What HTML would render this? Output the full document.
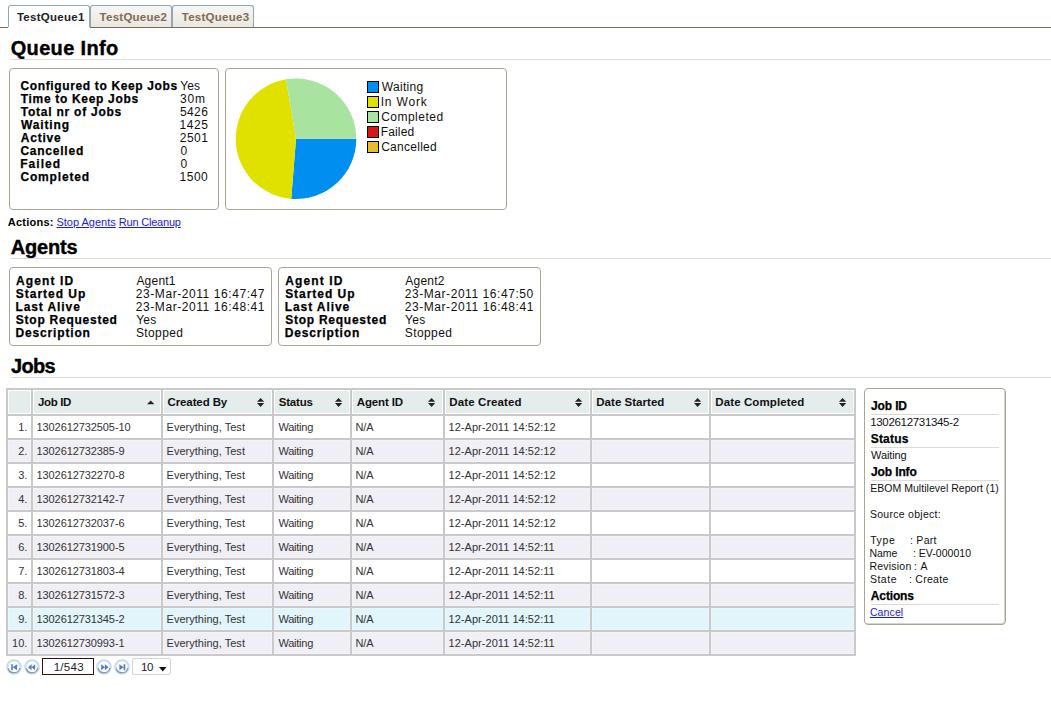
<!DOCTYPE html>
<html><head><meta charset="utf-8"><style>
html,body{margin:0;padding:0;background:#fff;width:1051px;height:702px;overflow:hidden;position:relative}
body{font-family:"Liberation Sans",sans-serif}
.t{position:absolute;white-space:nowrap;line-height:1}
.r{position:absolute}
</style></head><body>
<div class="r" style="left:0px;top:27px;width:8px;height:1px;background:#7b6a55"></div>
<div class="r" style="left:90px;top:27px;width:961px;height:1px;background:#7b6a55"></div>
<div class="r" style="left:8px;top:5px;width:82px;height:22px;background:#fff;border:1px solid #8fa7b9;border-bottom:none;border-radius:3px 3px 0 0;box-sizing:border-box"></div>
<div class="r" style="left:90px;top:5px;width:82px;height:22px;background:linear-gradient(#f7f6f2,#e9e7e0);border:1px solid #8fa7b9;border-bottom:none;border-radius:3px 3px 0 0;box-sizing:border-box"></div>
<div class="r" style="left:172px;top:5px;width:82px;height:22px;background:linear-gradient(#f7f6f2,#e9e7e0);border:1px solid #8fa7b9;border-bottom:none;border-radius:3px 3px 0 0;box-sizing:border-box"></div>
<div class="t " style="left:16.875px;top:11.96px;font-size:11.5px;font-weight:bold;color:#222;letter-spacing:0.286px;">TestQueue1</div>
<div class="t " style="left:99.575px;top:11.96px;font-size:11.5px;font-weight:bold;color:#7e6b55;letter-spacing:0.256px;">TestQueue2</div>
<div class="t " style="left:181.775px;top:11.96px;font-size:11.5px;font-weight:bold;color:#7e6b55;letter-spacing:0.256px;">TestQueue3</div>
<div class="t " style="left:10.65px;top:38.07px;font-size:20px;font-weight:bold;letter-spacing:0.356px;-webkit-text-stroke:0.4px #000;">Queue Info</div>
<div class="r" style="left:11px;top:59px;width:1040px;height:1px;background:#dcdcd6"></div>
<div class="t " style="left:10.7px;top:237.27px;font-size:20px;font-weight:bold;letter-spacing:-0.18px;-webkit-text-stroke:0.4px #000;">Agents</div>
<div class="r" style="left:11px;top:258px;width:1040px;height:1px;background:#dcdcd6"></div>
<div class="t " style="left:10.925px;top:356.27px;font-size:20px;font-weight:bold;letter-spacing:-0.633px;-webkit-text-stroke:0.4px #000;">Jobs</div>
<div class="r" style="left:11px;top:377px;width:1040px;height:1px;background:#dcdcd6"></div>
<div class="r" style="left:9px;top:68px;width:210px;height:142px;border:1px solid #aaa696;border-radius:4px;box-sizing:border-box"></div>
<div class="t " style="left:20.4px;top:79.74px;font-size:12px;font-weight:bold;letter-spacing:0.643px;-webkit-text-stroke:0.25px #000;">Configured to Keep Jobs</div>
<div class="t " style="left:180.15px;top:79.74px;font-size:12px;color:#111;letter-spacing:0.2px;">Yes</div>
<div class="t " style="left:20.775px;top:92.74px;font-size:12px;font-weight:bold;letter-spacing:0.677px;-webkit-text-stroke:0.25px #000;">Time to Keep Jobs</div>
<div class="t " style="left:179.9px;top:92.74px;font-size:12px;color:#111;letter-spacing:0.838px;">30m</div>
<div class="t " style="left:20.775px;top:105.74px;font-size:12px;font-weight:bold;letter-spacing:0.76px;-webkit-text-stroke:0.25px #000;">Total nr of Jobs</div>
<div class="t " style="left:179.9px;top:105.74px;font-size:12px;color:#111;letter-spacing:0.425px;">5426</div>
<div class="t " style="left:20.9px;top:118.74px;font-size:12px;font-weight:bold;letter-spacing:0.867px;-webkit-text-stroke:0.25px #000;">Waiting</div>
<div class="t " style="left:179.525px;top:118.74px;font-size:12px;color:#111;letter-spacing:0.55px;">1425</div>
<div class="t " style="left:20.65px;top:131.74px;font-size:12px;font-weight:bold;letter-spacing:0.825px;-webkit-text-stroke:0.25px #000;">Active</div>
<div class="t " style="left:179.775px;top:131.74px;font-size:12px;color:#111;letter-spacing:0.467px;">2501</div>
<div class="t " style="left:20.4px;top:144.74px;font-size:12px;font-weight:bold;letter-spacing:0.766px;-webkit-text-stroke:0.25px #000;">Cancelled</div>
<div class="t " style="left:180.4px;top:144.74px;font-size:12px;color:#111;">0</div>
<div class="t " style="left:20.15px;top:157.74px;font-size:12px;font-weight:bold;letter-spacing:1.075px;-webkit-text-stroke:0.25px #000;">Failed</div>
<div class="t " style="left:180.4px;top:157.74px;font-size:12px;color:#111;">0</div>
<div class="t " style="left:20.4px;top:170.74px;font-size:12px;font-weight:bold;letter-spacing:0.834px;-webkit-text-stroke:0.25px #000;">Completed</div>
<div class="t " style="left:179.525px;top:170.74px;font-size:12px;color:#111;letter-spacing:0.508px;">1500</div>
<div class="r" style="left:225px;top:68px;width:282px;height:142px;border:1px solid #aaa696;border-radius:4px;box-sizing:border-box"></div>
<svg style="position:absolute;left:0;top:0" width="1051" height="702"><path d="M296.0,138.8 L356.30,138.80 A60.3,60.3 0 0 1 291.22,198.91 Z" fill="#008ff0"/><path d="M296.0,138.8 L291.22,198.91 A60.3,60.3 0 0 1 286.03,79.33 Z" fill="#e1e100"/><path d="M296.0,138.8 L286.03,79.33 A60.3,60.3 0 0 1 356.30,138.80 Z" fill="#a9e3a0"/></svg>
<div class="r" style="left:367px;top:81px;width:12px;height:12px;background:#008ff0;border:1px solid #000;box-sizing:border-box"></div>
<div class="t " style="left:381.8px;top:80.64px;font-size:12px;color:#111;letter-spacing:0.292px;">Waiting</div>
<div class="r" style="left:367px;top:96px;width:12px;height:12px;background:#e1e100;border:1px solid #000;box-sizing:border-box"></div>
<div class="t " style="left:380.675px;top:95.64px;font-size:12px;color:#111;letter-spacing:0.833px;">In Work</div>
<div class="r" style="left:367px;top:111px;width:12px;height:12px;background:#a9e3a0;border:1px solid #000;box-sizing:border-box"></div>
<div class="t " style="left:381.175px;top:110.64px;font-size:12px;color:#111;letter-spacing:0.484px;">Completed</div>
<div class="r" style="left:367px;top:126px;width:12px;height:12px;background:#d81515;border:1px solid #000;box-sizing:border-box"></div>
<div class="t " style="left:380.8px;top:125.64px;font-size:12px;color:#111;letter-spacing:0.125px;">Failed</div>
<div class="r" style="left:367px;top:141px;width:12px;height:12px;background:#ebbb2e;border:1px solid #000;box-sizing:border-box"></div>
<div class="t " style="left:381.175px;top:140.64px;font-size:12px;color:#111;letter-spacing:0.275px;">Cancelled</div>
<div class="t " style="left:7.85px;top:217.29px;font-size:11px;font-weight:bold;letter-spacing:0.221px;">Actions:</div>
<div class="t " style="left:56.5px;top:217.29px;font-size:11px;color:#1a1ae6;letter-spacing:-0.01px;text-decoration:underline;">Stop Agents</div>
<div class="t " style="left:118.825px;top:217.29px;font-size:11px;color:#1a1ae6;letter-spacing:-0.208px;text-decoration:underline;">Run Cleanup</div>
<div class="r" style="left:9px;top:267px;width:263px;height:79px;border:1px solid #aaa696;border-radius:4px;box-sizing:border-box"></div>
<div class="t " style="left:15.95px;top:274.64px;font-size:12px;font-weight:bold;letter-spacing:1.114px;-webkit-text-stroke:0.25px #000;">Agent ID</div>
<div class="t " style="left:136.4px;top:274.64px;font-size:12px;color:#111;letter-spacing:0.22px;">Agent1</div>
<div class="t " style="left:15.825px;top:287.64px;font-size:12px;font-weight:bold;letter-spacing:0.969px;-webkit-text-stroke:0.25px #000;">Started Up</div>
<div class="t " style="left:135.775px;top:287.64px;font-size:12px;color:#111;letter-spacing:0.572px;">23-Mar-2011 16:47:47</div>
<div class="t " style="left:15.45px;top:300.64px;font-size:12px;font-weight:bold;letter-spacing:0.908px;-webkit-text-stroke:0.25px #000;">Last Alive</div>
<div class="t " style="left:135.775px;top:300.64px;font-size:12px;color:#111;letter-spacing:0.572px;">23-Mar-2011 16:48:41</div>
<div class="t " style="left:15.825px;top:313.64px;font-size:12px;font-weight:bold;letter-spacing:0.752px;-webkit-text-stroke:0.25px #000;">Stop Requested</div>
<div class="t " style="left:136.15px;top:313.64px;font-size:12px;color:#111;letter-spacing:0.3px;">Yes</div>
<div class="t " style="left:15.45px;top:326.64px;font-size:12px;font-weight:bold;letter-spacing:0.85px;-webkit-text-stroke:0.25px #000;">Description</div>
<div class="t " style="left:135.9px;top:326.64px;font-size:12px;color:#111;letter-spacing:0.404px;">Stopped</div>
<div class="r" style="left:278px;top:267px;width:263px;height:79px;border:1px solid #aaa696;border-radius:4px;box-sizing:border-box"></div>
<div class="t " style="left:285.25px;top:274.64px;font-size:12px;font-weight:bold;letter-spacing:1.114px;-webkit-text-stroke:0.25px #000;">Agent ID</div>
<div class="t " style="left:405.3px;top:274.64px;font-size:12px;color:#111;letter-spacing:0.22px;">Agent2</div>
<div class="t " style="left:285.125px;top:287.64px;font-size:12px;font-weight:bold;letter-spacing:0.969px;-webkit-text-stroke:0.25px #000;">Started Up</div>
<div class="t " style="left:404.675px;top:287.64px;font-size:12px;color:#111;letter-spacing:0.566px;">23-Mar-2011 16:47:50</div>
<div class="t " style="left:284.75px;top:300.64px;font-size:12px;font-weight:bold;letter-spacing:0.908px;-webkit-text-stroke:0.25px #000;">Last Alive</div>
<div class="t " style="left:404.675px;top:300.64px;font-size:12px;color:#111;letter-spacing:0.572px;">23-Mar-2011 16:48:41</div>
<div class="t " style="left:285.125px;top:313.64px;font-size:12px;font-weight:bold;letter-spacing:0.752px;-webkit-text-stroke:0.25px #000;">Stop Requested</div>
<div class="t " style="left:405.05px;top:313.64px;font-size:12px;color:#111;letter-spacing:0.3px;">Yes</div>
<div class="t " style="left:284.75px;top:326.64px;font-size:12px;font-weight:bold;letter-spacing:0.85px;-webkit-text-stroke:0.25px #000;">Description</div>
<div class="t " style="left:404.8px;top:326.64px;font-size:12px;color:#111;letter-spacing:0.404px;">Stopped</div>
<div class="r" style="left:6px;top:388px;width:850px;height:268px;background:#c9c9c9"></div>
<div class="r" style="left:8px;top:390px;width:23px;height:24px;background:#e4ecec;border:1px solid #fff;box-sizing:border-box"></div>
<div class="r" style="left:33px;top:390px;width:128px;height:24px;background:#e4ecec;border:1px solid #fff;box-sizing:border-box"></div>
<div class="t " style="left:37.875px;top:397.26px;font-size:11.5px;font-weight:bold;color:#111;letter-spacing:-0.325px;">Job ID</div>
<div class="r" style="left:163px;top:390px;width:109px;height:24px;background:#e4ecec;border:1px solid #fff;box-sizing:border-box"></div>
<div class="t " style="left:167.5px;top:397.26px;font-size:11.5px;font-weight:bold;color:#111;letter-spacing:-0.106px;">Created By</div>
<div class="r" style="left:274px;top:390px;width:76px;height:24px;background:#e4ecec;border:1px solid #fff;box-sizing:border-box"></div>
<div class="t " style="left:278.625px;top:397.26px;font-size:11.5px;font-weight:bold;color:#111;letter-spacing:-0.17px;">Status</div>
<div class="r" style="left:352px;top:390px;width:91px;height:24px;background:#e4ecec;border:1px solid #fff;box-sizing:border-box"></div>
<div class="t " style="left:356.75px;top:397.26px;font-size:11.5px;font-weight:bold;color:#111;letter-spacing:-0.146px;">Agent ID</div>
<div class="r" style="left:445px;top:390px;width:145px;height:24px;background:#e4ecec;border:1px solid #fff;box-sizing:border-box"></div>
<div class="t " style="left:449.25px;top:397.26px;font-size:11.5px;font-weight:bold;color:#111;letter-spacing:0.12px;">Date Created</div>
<div class="r" style="left:592px;top:390px;width:117px;height:24px;background:#e4ecec;border:1px solid #fff;box-sizing:border-box"></div>
<div class="t " style="left:596.25px;top:397.26px;font-size:11.5px;font-weight:bold;color:#111;letter-spacing:0.032px;">Date Started</div>
<div class="r" style="left:711px;top:390px;width:143px;height:24px;background:#e4ecec;border:1px solid #fff;box-sizing:border-box"></div>
<div class="t " style="left:715.25px;top:397.26px;font-size:11.5px;font-weight:bold;color:#111;letter-spacing:0.115px;">Date Completed</div>
<div class="r" style="left:8px;top:416px;width:23px;height:22px;background:#ffffff;border:1px solid #fff;box-sizing:border-box"></div>
<div class="t " style="left:18.15px;top:421.89px;font-size:11px;color:#333;">1.</div>
<div class="r" style="left:33px;top:416px;width:128px;height:22px;background:#ffffff;border:1px solid #fff;box-sizing:border-box"></div>
<div class="t " style="left:36.525px;top:421.89px;font-size:11px;color:#333;letter-spacing:-0.088px;">1302612732505-10</div>
<div class="r" style="left:163px;top:416px;width:109px;height:22px;background:#ffffff;border:1px solid #fff;box-sizing:border-box"></div>
<div class="t " style="left:166.525px;top:421.89px;font-size:11px;color:#333;letter-spacing:0.025px;">Everything, Test</div>
<div class="r" style="left:274px;top:416px;width:76px;height:22px;background:#ffffff;border:1px solid #fff;box-sizing:border-box"></div>
<div class="t " style="left:278.4px;top:421.89px;font-size:11px;color:#333;letter-spacing:-0.217px;">Waiting</div>
<div class="r" style="left:352px;top:416px;width:91px;height:22px;background:#ffffff;border:1px solid #fff;box-sizing:border-box"></div>
<div class="t " style="left:355.525px;top:421.89px;font-size:11px;color:#333;letter-spacing:-0.088px;">N/A</div>
<div class="r" style="left:445px;top:416px;width:145px;height:22px;background:#ffffff;border:1px solid #fff;box-sizing:border-box"></div>
<div class="t " style="left:448.525px;top:421.89px;font-size:11px;color:#333;letter-spacing:0.043px;">12-Apr-2011 14:52:12</div>
<div class="r" style="left:592px;top:416px;width:117px;height:22px;background:#ffffff;border:1px solid #fff;box-sizing:border-box"></div>
<div class="r" style="left:711px;top:416px;width:143px;height:22px;background:#ffffff;border:1px solid #fff;box-sizing:border-box"></div>
<div class="r" style="left:8px;top:440px;width:23px;height:22px;background:#efeff5;border:1px solid #f4f4f8;box-sizing:border-box"></div>
<div class="t " style="left:18.15px;top:445.89px;font-size:11px;color:#333;">2.</div>
<div class="r" style="left:33px;top:440px;width:128px;height:22px;background:#efeff5;border:1px solid #f4f4f8;box-sizing:border-box"></div>
<div class="t " style="left:36.525px;top:445.89px;font-size:11px;color:#333;letter-spacing:-0.088px;">1302612732385-9</div>
<div class="r" style="left:163px;top:440px;width:109px;height:22px;background:#efeff5;border:1px solid #f4f4f8;box-sizing:border-box"></div>
<div class="t " style="left:166.525px;top:445.89px;font-size:11px;color:#333;letter-spacing:0.025px;">Everything, Test</div>
<div class="r" style="left:274px;top:440px;width:76px;height:22px;background:#efeff5;border:1px solid #f4f4f8;box-sizing:border-box"></div>
<div class="t " style="left:278.4px;top:445.89px;font-size:11px;color:#333;letter-spacing:-0.217px;">Waiting</div>
<div class="r" style="left:352px;top:440px;width:91px;height:22px;background:#efeff5;border:1px solid #f4f4f8;box-sizing:border-box"></div>
<div class="t " style="left:355.525px;top:445.89px;font-size:11px;color:#333;letter-spacing:-0.088px;">N/A</div>
<div class="r" style="left:445px;top:440px;width:145px;height:22px;background:#efeff5;border:1px solid #f4f4f8;box-sizing:border-box"></div>
<div class="t " style="left:448.525px;top:445.89px;font-size:11px;color:#333;letter-spacing:0.043px;">12-Apr-2011 14:52:12</div>
<div class="r" style="left:592px;top:440px;width:117px;height:22px;background:#efeff5;border:1px solid #f4f4f8;box-sizing:border-box"></div>
<div class="r" style="left:711px;top:440px;width:143px;height:22px;background:#efeff5;border:1px solid #f4f4f8;box-sizing:border-box"></div>
<div class="r" style="left:8px;top:464px;width:23px;height:22px;background:#ffffff;border:1px solid #fff;box-sizing:border-box"></div>
<div class="t " style="left:18.15px;top:469.89px;font-size:11px;color:#333;">3.</div>
<div class="r" style="left:33px;top:464px;width:128px;height:22px;background:#ffffff;border:1px solid #fff;box-sizing:border-box"></div>
<div class="t " style="left:36.525px;top:469.89px;font-size:11px;color:#333;letter-spacing:-0.088px;">1302612732270-8</div>
<div class="r" style="left:163px;top:464px;width:109px;height:22px;background:#ffffff;border:1px solid #fff;box-sizing:border-box"></div>
<div class="t " style="left:166.525px;top:469.89px;font-size:11px;color:#333;letter-spacing:0.025px;">Everything, Test</div>
<div class="r" style="left:274px;top:464px;width:76px;height:22px;background:#ffffff;border:1px solid #fff;box-sizing:border-box"></div>
<div class="t " style="left:278.4px;top:469.89px;font-size:11px;color:#333;letter-spacing:-0.217px;">Waiting</div>
<div class="r" style="left:352px;top:464px;width:91px;height:22px;background:#ffffff;border:1px solid #fff;box-sizing:border-box"></div>
<div class="t " style="left:355.525px;top:469.89px;font-size:11px;color:#333;letter-spacing:-0.088px;">N/A</div>
<div class="r" style="left:445px;top:464px;width:145px;height:22px;background:#ffffff;border:1px solid #fff;box-sizing:border-box"></div>
<div class="t " style="left:448.525px;top:469.89px;font-size:11px;color:#333;letter-spacing:0.043px;">12-Apr-2011 14:52:12</div>
<div class="r" style="left:592px;top:464px;width:117px;height:22px;background:#ffffff;border:1px solid #fff;box-sizing:border-box"></div>
<div class="r" style="left:711px;top:464px;width:143px;height:22px;background:#ffffff;border:1px solid #fff;box-sizing:border-box"></div>
<div class="r" style="left:8px;top:488px;width:23px;height:22px;background:#efeff5;border:1px solid #f4f4f8;box-sizing:border-box"></div>
<div class="t " style="left:18.15px;top:493.89px;font-size:11px;color:#333;">4.</div>
<div class="r" style="left:33px;top:488px;width:128px;height:22px;background:#efeff5;border:1px solid #f4f4f8;box-sizing:border-box"></div>
<div class="t " style="left:36.525px;top:493.89px;font-size:11px;color:#333;letter-spacing:-0.088px;">1302612732142-7</div>
<div class="r" style="left:163px;top:488px;width:109px;height:22px;background:#efeff5;border:1px solid #f4f4f8;box-sizing:border-box"></div>
<div class="t " style="left:166.525px;top:493.89px;font-size:11px;color:#333;letter-spacing:0.025px;">Everything, Test</div>
<div class="r" style="left:274px;top:488px;width:76px;height:22px;background:#efeff5;border:1px solid #f4f4f8;box-sizing:border-box"></div>
<div class="t " style="left:278.4px;top:493.89px;font-size:11px;color:#333;letter-spacing:-0.217px;">Waiting</div>
<div class="r" style="left:352px;top:488px;width:91px;height:22px;background:#efeff5;border:1px solid #f4f4f8;box-sizing:border-box"></div>
<div class="t " style="left:355.525px;top:493.89px;font-size:11px;color:#333;letter-spacing:-0.088px;">N/A</div>
<div class="r" style="left:445px;top:488px;width:145px;height:22px;background:#efeff5;border:1px solid #f4f4f8;box-sizing:border-box"></div>
<div class="t " style="left:448.525px;top:493.89px;font-size:11px;color:#333;letter-spacing:0.043px;">12-Apr-2011 14:52:12</div>
<div class="r" style="left:592px;top:488px;width:117px;height:22px;background:#efeff5;border:1px solid #f4f4f8;box-sizing:border-box"></div>
<div class="r" style="left:711px;top:488px;width:143px;height:22px;background:#efeff5;border:1px solid #f4f4f8;box-sizing:border-box"></div>
<div class="r" style="left:8px;top:512px;width:23px;height:22px;background:#ffffff;border:1px solid #fff;box-sizing:border-box"></div>
<div class="t " style="left:18.15px;top:517.89px;font-size:11px;color:#333;">5.</div>
<div class="r" style="left:33px;top:512px;width:128px;height:22px;background:#ffffff;border:1px solid #fff;box-sizing:border-box"></div>
<div class="t " style="left:36.525px;top:517.89px;font-size:11px;color:#333;letter-spacing:-0.088px;">1302612732037-6</div>
<div class="r" style="left:163px;top:512px;width:109px;height:22px;background:#ffffff;border:1px solid #fff;box-sizing:border-box"></div>
<div class="t " style="left:166.525px;top:517.89px;font-size:11px;color:#333;letter-spacing:0.025px;">Everything, Test</div>
<div class="r" style="left:274px;top:512px;width:76px;height:22px;background:#ffffff;border:1px solid #fff;box-sizing:border-box"></div>
<div class="t " style="left:278.4px;top:517.89px;font-size:11px;color:#333;letter-spacing:-0.217px;">Waiting</div>
<div class="r" style="left:352px;top:512px;width:91px;height:22px;background:#ffffff;border:1px solid #fff;box-sizing:border-box"></div>
<div class="t " style="left:355.525px;top:517.89px;font-size:11px;color:#333;letter-spacing:-0.088px;">N/A</div>
<div class="r" style="left:445px;top:512px;width:145px;height:22px;background:#ffffff;border:1px solid #fff;box-sizing:border-box"></div>
<div class="t " style="left:448.525px;top:517.89px;font-size:11px;color:#333;letter-spacing:0.043px;">12-Apr-2011 14:52:12</div>
<div class="r" style="left:592px;top:512px;width:117px;height:22px;background:#ffffff;border:1px solid #fff;box-sizing:border-box"></div>
<div class="r" style="left:711px;top:512px;width:143px;height:22px;background:#ffffff;border:1px solid #fff;box-sizing:border-box"></div>
<div class="r" style="left:8px;top:536px;width:23px;height:22px;background:#efeff5;border:1px solid #f4f4f8;box-sizing:border-box"></div>
<div class="t " style="left:18.15px;top:541.89px;font-size:11px;color:#333;">6.</div>
<div class="r" style="left:33px;top:536px;width:128px;height:22px;background:#efeff5;border:1px solid #f4f4f8;box-sizing:border-box"></div>
<div class="t " style="left:36.525px;top:541.89px;font-size:11px;color:#333;letter-spacing:-0.088px;">1302612731900-5</div>
<div class="r" style="left:163px;top:536px;width:109px;height:22px;background:#efeff5;border:1px solid #f4f4f8;box-sizing:border-box"></div>
<div class="t " style="left:166.525px;top:541.89px;font-size:11px;color:#333;letter-spacing:0.025px;">Everything, Test</div>
<div class="r" style="left:274px;top:536px;width:76px;height:22px;background:#efeff5;border:1px solid #f4f4f8;box-sizing:border-box"></div>
<div class="t " style="left:278.4px;top:541.89px;font-size:11px;color:#333;letter-spacing:-0.217px;">Waiting</div>
<div class="r" style="left:352px;top:536px;width:91px;height:22px;background:#efeff5;border:1px solid #f4f4f8;box-sizing:border-box"></div>
<div class="t " style="left:355.525px;top:541.89px;font-size:11px;color:#333;letter-spacing:-0.088px;">N/A</div>
<div class="r" style="left:445px;top:536px;width:145px;height:22px;background:#efeff5;border:1px solid #f4f4f8;box-sizing:border-box"></div>
<div class="t " style="left:448.525px;top:541.89px;font-size:11px;color:#333;letter-spacing:0.043px;">12-Apr-2011 14:52:11</div>
<div class="r" style="left:592px;top:536px;width:117px;height:22px;background:#efeff5;border:1px solid #f4f4f8;box-sizing:border-box"></div>
<div class="r" style="left:711px;top:536px;width:143px;height:22px;background:#efeff5;border:1px solid #f4f4f8;box-sizing:border-box"></div>
<div class="r" style="left:8px;top:560px;width:23px;height:22px;background:#ffffff;border:1px solid #fff;box-sizing:border-box"></div>
<div class="t " style="left:18.15px;top:565.89px;font-size:11px;color:#333;">7.</div>
<div class="r" style="left:33px;top:560px;width:128px;height:22px;background:#ffffff;border:1px solid #fff;box-sizing:border-box"></div>
<div class="t " style="left:36.525px;top:565.89px;font-size:11px;color:#333;letter-spacing:-0.089px;">1302612731803-4</div>
<div class="r" style="left:163px;top:560px;width:109px;height:22px;background:#ffffff;border:1px solid #fff;box-sizing:border-box"></div>
<div class="t " style="left:166.525px;top:565.89px;font-size:11px;color:#333;letter-spacing:0.025px;">Everything, Test</div>
<div class="r" style="left:274px;top:560px;width:76px;height:22px;background:#ffffff;border:1px solid #fff;box-sizing:border-box"></div>
<div class="t " style="left:278.4px;top:565.89px;font-size:11px;color:#333;letter-spacing:-0.217px;">Waiting</div>
<div class="r" style="left:352px;top:560px;width:91px;height:22px;background:#ffffff;border:1px solid #fff;box-sizing:border-box"></div>
<div class="t " style="left:355.525px;top:565.89px;font-size:11px;color:#333;letter-spacing:-0.088px;">N/A</div>
<div class="r" style="left:445px;top:560px;width:145px;height:22px;background:#ffffff;border:1px solid #fff;box-sizing:border-box"></div>
<div class="t " style="left:448.525px;top:565.89px;font-size:11px;color:#333;letter-spacing:0.043px;">12-Apr-2011 14:52:11</div>
<div class="r" style="left:592px;top:560px;width:117px;height:22px;background:#ffffff;border:1px solid #fff;box-sizing:border-box"></div>
<div class="r" style="left:711px;top:560px;width:143px;height:22px;background:#ffffff;border:1px solid #fff;box-sizing:border-box"></div>
<div class="r" style="left:8px;top:584px;width:23px;height:22px;background:#efeff5;border:1px solid #f4f4f8;box-sizing:border-box"></div>
<div class="t " style="left:18.15px;top:589.89px;font-size:11px;color:#333;">8.</div>
<div class="r" style="left:33px;top:584px;width:128px;height:22px;background:#efeff5;border:1px solid #f4f4f8;box-sizing:border-box"></div>
<div class="t " style="left:36.525px;top:589.89px;font-size:11px;color:#333;letter-spacing:-0.088px;">1302612731572-3</div>
<div class="r" style="left:163px;top:584px;width:109px;height:22px;background:#efeff5;border:1px solid #f4f4f8;box-sizing:border-box"></div>
<div class="t " style="left:166.525px;top:589.89px;font-size:11px;color:#333;letter-spacing:0.025px;">Everything, Test</div>
<div class="r" style="left:274px;top:584px;width:76px;height:22px;background:#efeff5;border:1px solid #f4f4f8;box-sizing:border-box"></div>
<div class="t " style="left:278.4px;top:589.89px;font-size:11px;color:#333;letter-spacing:-0.217px;">Waiting</div>
<div class="r" style="left:352px;top:584px;width:91px;height:22px;background:#efeff5;border:1px solid #f4f4f8;box-sizing:border-box"></div>
<div class="t " style="left:355.525px;top:589.89px;font-size:11px;color:#333;letter-spacing:-0.088px;">N/A</div>
<div class="r" style="left:445px;top:584px;width:145px;height:22px;background:#efeff5;border:1px solid #f4f4f8;box-sizing:border-box"></div>
<div class="t " style="left:448.525px;top:589.89px;font-size:11px;color:#333;letter-spacing:0.043px;">12-Apr-2011 14:52:11</div>
<div class="r" style="left:592px;top:584px;width:117px;height:22px;background:#efeff5;border:1px solid #f4f4f8;box-sizing:border-box"></div>
<div class="r" style="left:711px;top:584px;width:143px;height:22px;background:#efeff5;border:1px solid #f4f4f8;box-sizing:border-box"></div>
<div class="r" style="left:8px;top:608px;width:23px;height:22px;background:#e1f5fb;border:1px solid #e8f8fc;box-sizing:border-box"></div>
<div class="t " style="left:18.15px;top:613.89px;font-size:11px;color:#333;">9.</div>
<div class="r" style="left:33px;top:608px;width:128px;height:22px;background:#e1f5fb;border:1px solid #e8f8fc;box-sizing:border-box"></div>
<div class="t " style="left:36.525px;top:613.89px;font-size:11px;color:#333;letter-spacing:-0.088px;">1302612731345-2</div>
<div class="r" style="left:163px;top:608px;width:109px;height:22px;background:#e1f5fb;border:1px solid #e8f8fc;box-sizing:border-box"></div>
<div class="t " style="left:166.525px;top:613.89px;font-size:11px;color:#333;letter-spacing:0.025px;">Everything, Test</div>
<div class="r" style="left:274px;top:608px;width:76px;height:22px;background:#e1f5fb;border:1px solid #e8f8fc;box-sizing:border-box"></div>
<div class="t " style="left:278.4px;top:613.89px;font-size:11px;color:#333;letter-spacing:-0.217px;">Waiting</div>
<div class="r" style="left:352px;top:608px;width:91px;height:22px;background:#e1f5fb;border:1px solid #e8f8fc;box-sizing:border-box"></div>
<div class="t " style="left:355.525px;top:613.89px;font-size:11px;color:#333;letter-spacing:-0.088px;">N/A</div>
<div class="r" style="left:445px;top:608px;width:145px;height:22px;background:#e1f5fb;border:1px solid #e8f8fc;box-sizing:border-box"></div>
<div class="t " style="left:448.525px;top:613.89px;font-size:11px;color:#333;letter-spacing:0.043px;">12-Apr-2011 14:52:11</div>
<div class="r" style="left:592px;top:608px;width:117px;height:22px;background:#e1f5fb;border:1px solid #e8f8fc;box-sizing:border-box"></div>
<div class="r" style="left:711px;top:608px;width:143px;height:22px;background:#e1f5fb;border:1px solid #e8f8fc;box-sizing:border-box"></div>
<div class="r" style="left:8px;top:632px;width:23px;height:22px;background:#efeff5;border:1px solid #f4f4f8;box-sizing:border-box"></div>
<div class="t " style="left:12.024999999999999px;top:637.89px;font-size:11px;color:#333;">10.</div>
<div class="r" style="left:33px;top:632px;width:128px;height:22px;background:#efeff5;border:1px solid #f4f4f8;box-sizing:border-box"></div>
<div class="t " style="left:36.525px;top:637.89px;font-size:11px;color:#333;letter-spacing:-0.088px;">1302612730993-1</div>
<div class="r" style="left:163px;top:632px;width:109px;height:22px;background:#efeff5;border:1px solid #f4f4f8;box-sizing:border-box"></div>
<div class="t " style="left:166.525px;top:637.89px;font-size:11px;color:#333;letter-spacing:0.025px;">Everything, Test</div>
<div class="r" style="left:274px;top:632px;width:76px;height:22px;background:#efeff5;border:1px solid #f4f4f8;box-sizing:border-box"></div>
<div class="t " style="left:278.4px;top:637.89px;font-size:11px;color:#333;letter-spacing:-0.217px;">Waiting</div>
<div class="r" style="left:352px;top:632px;width:91px;height:22px;background:#efeff5;border:1px solid #f4f4f8;box-sizing:border-box"></div>
<div class="t " style="left:355.525px;top:637.89px;font-size:11px;color:#333;letter-spacing:-0.088px;">N/A</div>
<div class="r" style="left:445px;top:632px;width:145px;height:22px;background:#efeff5;border:1px solid #f4f4f8;box-sizing:border-box"></div>
<div class="t " style="left:448.525px;top:637.89px;font-size:11px;color:#333;letter-spacing:0.043px;">12-Apr-2011 14:52:11</div>
<div class="r" style="left:592px;top:632px;width:117px;height:22px;background:#efeff5;border:1px solid #f4f4f8;box-sizing:border-box"></div>
<div class="r" style="left:711px;top:632px;width:143px;height:22px;background:#efeff5;border:1px solid #f4f4f8;box-sizing:border-box"></div>
<svg style="position:absolute;left:256.9px;top:397px" width="8" height="11"><path d="M3.6 0.9 L7.2 4.7 L0 4.7 Z M0 6.1 L7.2 6.1 L3.6 10 Z" fill="#222"/></svg>
<svg style="position:absolute;left:335.1px;top:397px" width="8" height="11"><path d="M3.6 0.9 L7.2 4.7 L0 4.7 Z M0 6.1 L7.2 6.1 L3.6 10 Z" fill="#222"/></svg>
<svg style="position:absolute;left:427.8px;top:397px" width="8" height="11"><path d="M3.6 0.9 L7.2 4.7 L0 4.7 Z M0 6.1 L7.2 6.1 L3.6 10 Z" fill="#222"/></svg>
<svg style="position:absolute;left:575.3px;top:397px" width="8" height="11"><path d="M3.6 0.9 L7.2 4.7 L0 4.7 Z M0 6.1 L7.2 6.1 L3.6 10 Z" fill="#222"/></svg>
<svg style="position:absolute;left:694.0px;top:397px" width="8" height="11"><path d="M3.6 0.9 L7.2 4.7 L0 4.7 Z M0 6.1 L7.2 6.1 L3.6 10 Z" fill="#222"/></svg>
<svg style="position:absolute;left:839.2px;top:397px" width="8" height="11"><path d="M3.6 0.9 L7.2 4.7 L0 4.7 Z M0 6.1 L7.2 6.1 L3.6 10 Z" fill="#222"/></svg>
<svg style="position:absolute;left:146.9px;top:399px" width="8" height="6"><path d="M3.7 1.4 L7.4 5.3 L0 5.3 Z" fill="#222"/></svg>
<svg style="position:absolute;left:5.800000000000001px;top:658.6px" width="16" height="16"><defs><radialGradient id="g13" cx="50%" cy="45%" r="55%"><stop offset="0" stop-color="#eef4fb"/><stop offset="0.7" stop-color="#ffffff"/><stop offset="1" stop-color="#f0f0f0"/></radialGradient></defs><circle cx="8" cy="8" r="7" fill="none" stroke="#bcd9f8" stroke-width="1.6"/><circle cx="8" cy="8" r="6" fill="url(#g13)" stroke="#dadada" stroke-width="0.8"/><path d="M2.3 9.5 A6 6 0 0 0 13.9 9.0" fill="none" stroke="#8c8c8c" stroke-width="1.1"/><path d="M5.2 5.2 h1.6 v6 h-1.6Z M6.8 8.2 L11.1 5.2 L11.1 11.2Z" fill="#4a7fc6"/></svg>
<svg style="position:absolute;left:23.8px;top:658.6px" width="16" height="16"><defs><radialGradient id="g31" cx="50%" cy="45%" r="55%"><stop offset="0" stop-color="#eef4fb"/><stop offset="0.7" stop-color="#ffffff"/><stop offset="1" stop-color="#f0f0f0"/></radialGradient></defs><circle cx="8" cy="8" r="7" fill="none" stroke="#bcd9f8" stroke-width="1.6"/><circle cx="8" cy="8" r="6" fill="url(#g31)" stroke="#dadada" stroke-width="0.8"/><path d="M2.3 9.5 A6 6 0 0 0 13.9 9.0" fill="none" stroke="#8c8c8c" stroke-width="1.1"/><path d="M4 8.2 L7.6 5.2 L7.6 11.2Z M7.6 8.2 L11.2 5.2 L11.2 11.2Z" fill="#4a7fc6"/></svg>
<svg style="position:absolute;left:95.6px;top:658.6px" width="16" height="16"><defs><radialGradient id="g103" cx="50%" cy="45%" r="55%"><stop offset="0" stop-color="#eef4fb"/><stop offset="0.7" stop-color="#ffffff"/><stop offset="1" stop-color="#f0f0f0"/></radialGradient></defs><circle cx="8" cy="8" r="7" fill="none" stroke="#bcd9f8" stroke-width="1.6"/><circle cx="8" cy="8" r="6" fill="url(#g103)" stroke="#dadada" stroke-width="0.8"/><path d="M2.3 9.5 A6 6 0 0 0 13.9 9.0" fill="none" stroke="#8c8c8c" stroke-width="1.1"/><path d="M5.2 5.2 L8.9 8.2 L5.2 11.2Z M8.9 5.2 L12.6 8.2 L8.9 11.2Z" fill="#4a7fc6"/></svg>
<svg style="position:absolute;left:113.5px;top:658.6px" width="16" height="16"><defs><radialGradient id="g121" cx="50%" cy="45%" r="55%"><stop offset="0" stop-color="#eef4fb"/><stop offset="0.7" stop-color="#ffffff"/><stop offset="1" stop-color="#f0f0f0"/></radialGradient></defs><circle cx="8" cy="8" r="7" fill="none" stroke="#bcd9f8" stroke-width="1.6"/><circle cx="8" cy="8" r="6" fill="url(#g121)" stroke="#dadada" stroke-width="0.8"/><path d="M2.3 9.5 A6 6 0 0 0 13.9 9.0" fill="none" stroke="#8c8c8c" stroke-width="1.1"/><path d="M5.4 5.2 L9.6 8.2 L5.4 11.2Z M9.6 5.2 h1.7 v6 h-1.7Z" fill="#4a7fc6"/></svg>
<div class="r" style="left:42px;top:658px;width:52px;height:17px;border:1.5px solid #3f0d0d;box-sizing:border-box;background:#fff"></div>
<div class="t " style="left:53.625px;top:662.26px;font-size:11.5px;color:#222;letter-spacing:0.281px;">1/543</div>
<div class="r" style="left:132px;top:658px;width:39px;height:17px;border:1px solid #d3d3d3;border-radius:2px;box-sizing:border-box;background:#fff"></div>
<div class="t " style="left:140.925px;top:662.26px;font-size:11.5px;color:#222;letter-spacing:-0.3px;">10</div>
<svg style="position:absolute;left:158.5px;top:666.5px" width="8" height="5"><path d="M0 0 L7.5 0 L3.75 4.5Z" fill="#111"/></svg>
<div class="r" style="left:864px;top:388px;width:142px;height:237px;border:1px solid #aaa696;border-radius:4px;box-sizing:border-box;box-shadow:inset -1px -1px 0 #d4d4d4"></div>
<div class="t " style="left:870.975px;top:399.94px;font-size:12px;font-weight:bold;letter-spacing:-0.12px;-webkit-text-stroke:0.25px #000;">Job ID</div>
<div class="r" style="left:871px;top:414px;width:128px;height:1px;background:#dcdad4"></div>
<div class="t " style="left:870.225px;top:417.06px;font-size:11.5px;color:#111;letter-spacing:-0.321px;">1302612731345-2</div>
<div class="t " style="left:870.725px;top:432.94px;font-size:12px;font-weight:bold;letter-spacing:0.185px;-webkit-text-stroke:0.25px #000;">Status</div>
<div class="r" style="left:871px;top:447px;width:128px;height:1px;background:#dcdad4"></div>
<div class="t " style="left:871.1px;top:450.39px;font-size:11px;color:#111;letter-spacing:-0.133px;">Waiting</div>
<div class="t " style="left:870.975px;top:465.84px;font-size:12px;font-weight:bold;letter-spacing:-0.118px;-webkit-text-stroke:0.25px #000;">Job Info</div>
<div class="r" style="left:871px;top:480px;width:128px;height:1px;background:#dcdad4"></div>
<div class="t " style="left:870.225px;top:483.31px;font-size:10.5px;color:#111;letter-spacing:0.03px;">EBOM Multilevel Report (1)</div>
<div class="t " style="left:869.9px;top:509.31px;font-size:10.5px;color:#111;letter-spacing:0.281px;">Source object:</div>
<div class="t " style="left:870.15px;top:535.31px;font-size:10.5px;color:#111;letter-spacing:0.633px;">Type</div>
<div class="t " style="left:909.9px;top:535.31px;font-size:10.5px;color:#111;letter-spacing:0.3px;">: Part</div>
<div class="t " style="left:869.525px;top:548.31px;font-size:10.5px;color:#111;letter-spacing:-0.042px;">Name</div>
<div class="t " style="left:912.9px;top:548.31px;font-size:10.5px;color:#111;letter-spacing:0.04px;">: EV-000010</div>
<div class="t " style="left:869.525px;top:561.31px;font-size:10.5px;color:#111;letter-spacing:0.211px;">Revision</div>
<div class="t " style="left:913.9px;top:561.31px;font-size:10.5px;color:#111;letter-spacing:0.675px;">: A</div>
<div class="t " style="left:869.9px;top:574.31px;font-size:10.5px;color:#111;letter-spacing:0.525px;">State</div>
<div class="t " style="left:908.9px;top:574.31px;font-size:10.5px;color:#111;letter-spacing:0.289px;">: Create</div>
<div class="t " style="left:870.85px;top:590.24px;font-size:12px;font-weight:bold;letter-spacing:-0.146px;-webkit-text-stroke:0.25px #000;">Actions</div>
<div class="r" style="left:871px;top:604px;width:128px;height:1px;background:#dcdad4"></div>
<div class="t " style="left:869.9px;top:607.11px;font-size:10.5px;color:#1a1ae6;letter-spacing:0.12px;text-decoration:underline;">Cancel</div>
</body></html>
